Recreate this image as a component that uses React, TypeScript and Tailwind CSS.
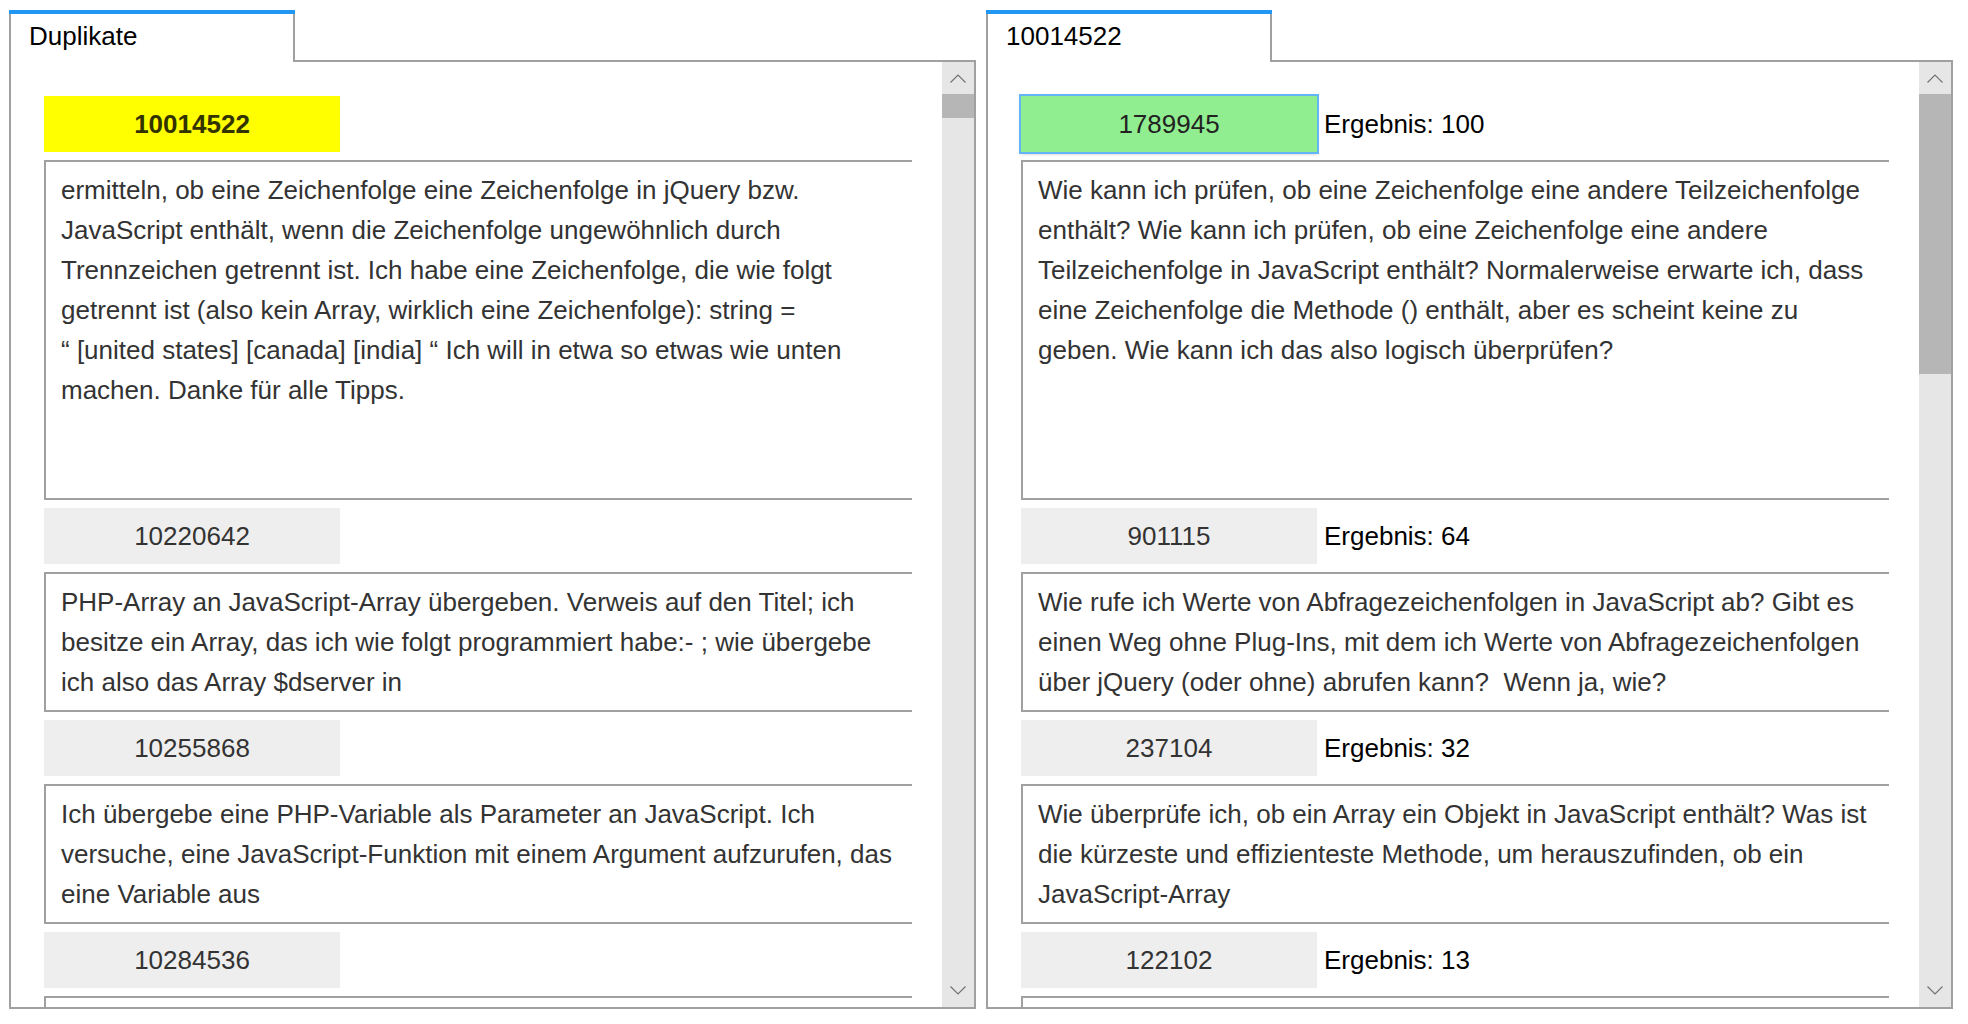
import React from "react";

type Entry = {
  id: string;
  score?: number;
  text: string;
  tall?: boolean;
  active?: boolean;
};

const duplicates: Entry[] = [
  {
    id: "10014522",
    tall: true,
    active: true,
    text:
      "ermitteln, ob eine Zeichenfolge eine Zeichenfolge in jQuery bzw. JavaScript enthält, wenn die Zeichenfolge ungewöhnlich durch Trennzeichen getrennt ist. Ich habe eine Zeichenfolge, die wie folgt getrennt ist (also kein Array, wirklich eine Zeichenfolge): string = “\u00a0[united\u00a0states] [canada] [india] “ Ich will in etwa so etwas wie unten machen. Danke für alle Tipps.",
  },
  {
    id: "10220642",
    text:
      "PHP-Array an JavaScript-Array übergeben. Verweis auf den Titel; ich besitze ein Array, das ich wie folgt programmiert habe:- ; wie übergebe ich also das Array $dserver in",
  },
  {
    id: "10255868",
    text:
      "Ich übergebe eine PHP-Variable als Parameter an JavaScript. Ich versuche, eine JavaScript-Funktion mit einem Argument aufzurufen, das eine Variable aus",
  },
  { id: "10284536", text: "" },
];

const matches: Entry[] = [
  {
    id: "1789945",
    score: 100,
    tall: true,
    active: true,
    text:
      "Wie kann ich prüfen, ob eine Zeichenfolge eine andere Teilzeichenfolge enthält? Wie kann ich prüfen, ob eine Zeichenfolge eine andere Teilzeichenfolge in JavaScript enthält? Normalerweise erwarte ich, dass eine Zeichenfolge die Methode () enthält, aber es scheint keine zu geben. Wie kann ich das also logisch überprüfen?",
  },
  {
    id: "901115",
    score: 64,
    text:
      "Wie rufe ich Werte von Abfragezeichenfolgen in JavaScript ab? Gibt es einen Weg ohne Plug-Ins, mit dem ich Werte von Abfragezeichenfolgen über jQuery (oder ohne) abrufen kann?\u00a0 Wenn ja, wie?",
  },
  {
    id: "237104",
    score: 32,
    text:
      "Wie überprüfe ich, ob ein Array ein Objekt in JavaScript enthält? Was ist die kürzeste und effizienteste Methode, um herauszufinden, ob ein JavaScript-Array",
  },
  { id: "122102", score: 13, text: "" },
];

function Chevron({ down }: { down?: boolean }) {
  return (
    <svg width="16" height="9" viewBox="0 0 16 9" fill="none">
      <polyline
        points={down ? "0.5,0.5 8,8 15.5,0.5" : "0.5,8.5 8,1 15.5,8.5"}
        stroke="#6f6f6f"
        strokeWidth="1.1"
      />
    </svg>
  );
}

function Scrollbar({ thumb }: { thumb: number }) {
  return (
    <div className="flex w-[32px] flex-col bg-[#e6e6e6]">
      <div className="flex h-[32px] items-center justify-center">
        <Chevron />
      </div>
      <div className="bg-[#b6b6b6]" style={{ height: thumb }} />
      <div className="flex-1" />
      <div className="flex h-[33px] items-center justify-center">
        <Chevron down />
      </div>
    </div>
  );
}

function IdRow({ entry, left }: { entry: Entry; left: boolean }) {
  let box = "bg-[#eeeeee] text-[#333333]";
  if (entry.active && left) box = "bg-[#ffff00] font-bold text-[#333300]";
  if (entry.active && !left)
    box =
      "bg-[#90ee90] text-[#222222] ring-2 ring-[#64b4f6] shadow-[0_2px_3px_rgba(0,0,0,0.25)]";

  return (
    <div className="flex h-[56px] shrink-0 items-center gap-[7px]">
      <div className={`flex h-[56px] w-[296px] items-center justify-center ${box}`}>
        {entry.id}
      </div>
      {entry.score !== undefined && (
        <span className="text-black">Ergebnis: {entry.score}</span>
      )}
    </div>
  );
}

function TextBox({ entry }: { entry: Entry }) {
  return (
    <div
      className={`shrink-0 border-y-2 border-l-2 border-[#a0a0a0] py-[8px] pl-[15px] pr-[8px] text-[#333333] ${
        entry.tall ? "h-[340px]" : "h-[140px]"
      }`}
    >
      {entry.text}
    </div>
  );
}

function Panel({
  title,
  entries,
  left,
  thumb,
}: {
  title: string;
  entries: Entry[];
  left: boolean;
  thumb: number;
}) {
  return (
    <div className="flex h-[999px] w-[967px] flex-col">
      {/* tab header */}
      <div className="flex h-[52px] items-end">
        <div className="flex h-[52px] w-[286px] flex-col">
          <div className="h-[4px] bg-[#2196f3]" />
          <div className="flex-1 border-x-2 border-[#a0a0a0] bg-white pl-[18px] pt-[2px] text-black">
            {title}
          </div>
        </div>
        <div className="h-[2px] flex-1 bg-[#a0a0a0]" />
      </div>

      {/* body */}
      <div className="flex min-h-0 flex-1 border-x-2 border-b-2 border-[#a0a0a0]">
        <div className="flex min-w-0 flex-1 flex-col gap-[8px] overflow-hidden pl-[33px] pr-[30px] pt-[34px]">
          {entries.map((e) => (
            <React.Fragment key={e.id}>
              <IdRow entry={e} left={left} />
              <TextBox entry={e} />
            </React.Fragment>
          ))}
        </div>
        <Scrollbar thumb={thumb} />
      </div>
    </div>
  );
}

export default function App() {
  return (
    <div className="flex h-[1024px] w-[1968px] gap-[10px] overflow-hidden bg-white pl-[9px] pt-[10px] font-['Liberation_Sans',Arial,sans-serif] text-[26px] leading-[40px]">
      <Panel title="Duplikate" entries={duplicates} left thumb={24} />
      <Panel title="10014522" entries={matches} left={false} thumb={280} />
    </div>
  );
}
